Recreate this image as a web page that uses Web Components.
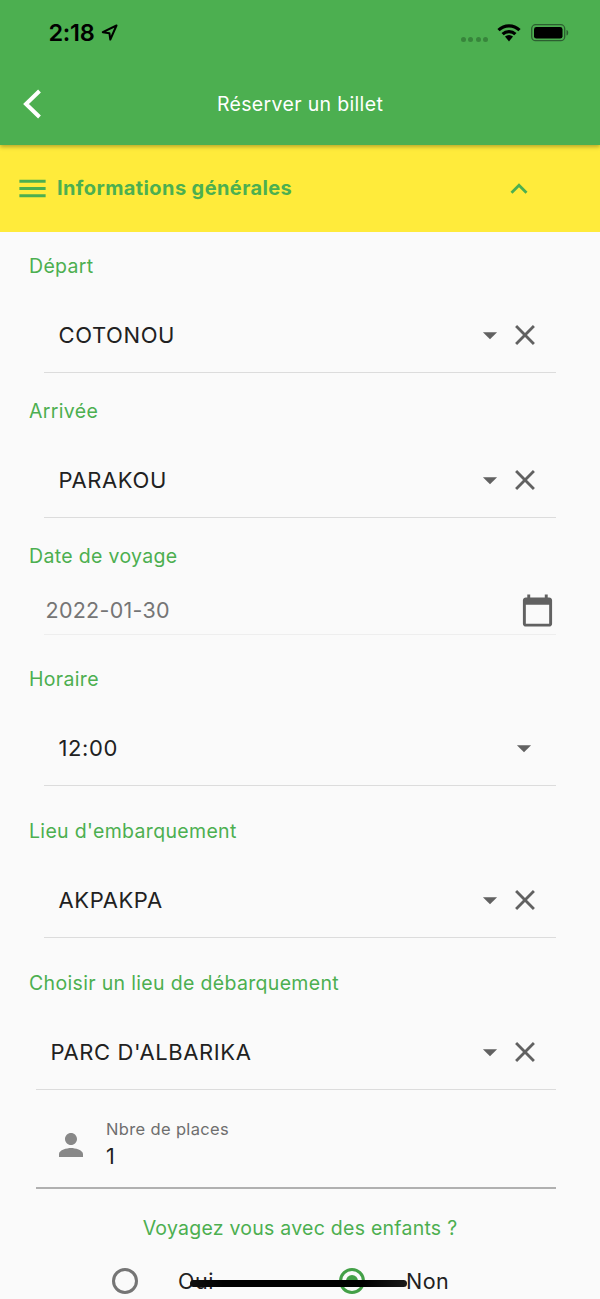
<!DOCTYPE html>
<html lang="fr"><head><meta charset="utf-8"><title>Réserver un billet</title>
<style>
html,body{margin:0;padding:0;height:1299px;overflow:hidden;background:#fafafa;font-family:Inter,"Noto Sans",sans-serif}
</style></head><body>
<app-bar title="Réserver un billet"></app-bar>
<section-header title="Informations générales"></section-header>
<form-label style="--top:22px;--lh:23px">Départ</form-label>
<select-field value="COTONOU" clear></select-field>
<form-label style="--top:26px;--lh:23px">Arrivée</form-label>
<select-field value="PARAKOU" clear></select-field>
<form-label style="--top:26px;--lh:23px">Date de voyage</form-label>
<date-field value="2022-01-30"></date-field>
<form-label style="--top:32px;--lh:23px">Horaire</form-label>
<select-field value="12:00" wide></select-field>
<form-label style="--top:33px">Lieu d'embarquement</form-label>
<select-field value="AKPAKPA" clear style="--p:18px;--h:76px"></select-field>
<form-label style="--top:33px">Choisir un lieu de débarquement</form-label>
<select-field value="PARC D'ALBARIKA" clear shifted style="--p:18px;--h:76px"></select-field>
<places-field label="Nbre de places" value="1"></places-field>
<radio-question question="Voyagez vous avec des enfants ?"></radio-question>
<home-indicator></home-indicator>
<script>
const ICON={
close:'M19 6.41L17.59 5 12 10.59 6.41 5 5 6.41 10.59 12 5 17.59 6.41 19 12 13.41 17.59 19 19 17.59 13.41 12z',
drop:'M7 10l5 5 5-5z',
cal:'M20 3h-1V1h-2v2H7V1H5v2H4c-1.1 0-2 .9-2 2v16c0 1.1.9 2 2 2h16c1.1 0 2-.9 2-2V5c0-1.1-.9-2-2-2zm0 18H4V8h16v13z',
person:'M12 12c2.21 0 4-1.79 4-4s-1.79-4-4-4-4 1.79-4 4 1.79 4 4 4zm0 2c-2.67 0-8 1.34-8 4v2h16v-2c0-2.66-5.33-4-8-4z',
menu:'M3 18h18v-2H3v2zm0-5h18v-2H3v2zm0-7v2h18V6H3z',
less:'M12 8l-6 6 1.41 1.41L12 10.83l4.59 4.58L18 14z'};
const icon=(n,s,c)=>`<svg width="${s}" height="${s}" viewBox="0 0 24 24" fill="${c}" style="display:block;flex:none"><path d="${ICON[n]}"/></svg>`;
class Base extends HTMLElement{
  connectedCallback(){ if(!this.shadowRoot){this.attachShadow({mode:'open'}).innerHTML=this.render();} }
  a(n){return this.getAttribute(n)||''}
}
customElements.define('app-bar',class extends Base{render(){return `<style>
:host{display:block;height:145px;background:#4caf50;box-shadow:0 2px 4px rgba(0,0,0,.28);position:relative;z-index:2}
.status{height:66px;display:flex;align-items:flex-start;padding:0 31px 0 48.500px}
.time{font:600 23.5px/24px Inter,sans-serif;color:#000;margin-top:21px;letter-spacing:-.3px}
.loc{margin:24px 0 0 7px}
.sp{flex:1}
.dots{display:flex;gap:2.500px;margin:36.500px 9px 0 0}.dots i{width:5px;height:5px;border-radius:50%;background:#37853b}
.wifi{margin:24px 10px 0 0}.batt{margin:24px 0 0 0}
.nav{height:79px;display:flex;align-items:center;position:relative}
.back{margin:-3px 0 0 22px}
.t{position:absolute;left:0;right:0;top:26px;text-align:center;font:400 19.5px/24px Inter,sans-serif;color:#fff;letter-spacing:.34px}
</style>
<div class="status"><span class="time">2:18</span>
<svg class="loc" width="17" height="17" viewBox="0 0 17 17"><path d="M15.5 1.5 1.8 8.2l6.6 1 .9 6.3z" fill="none" stroke="#000" stroke-width="2" stroke-linejoin="round"/></svg>
<span class="sp"></span><span class="dots"><i></i><i></i><i></i><i></i></span>
<svg class="wifi" width="24" height="18" viewBox="0 0 24 18"><path d="M1.5 6.2a15 15 0 0 1 21 0" fill="none" stroke="#000" stroke-width="3.2"/><path d="M5.6 10.2a9.2 9.2 0 0 1 12.8 0" fill="none" stroke="#000" stroke-width="3.2"/><path d="M8 12.5a6 6 0 0 1 8 0L12 17.5z" fill="#000"/></svg>
<svg class="batt" width="38" height="18" viewBox="0 0 38 18"><rect x=".7" y=".7" width="33" height="16" rx="4" fill="none" stroke="#2c5e30" stroke-width="1.3"/><rect x="3" y="3" width="28.5" height="11.6" rx="2.4" fill="#000"/><path d="M35.5 6v5.5c1.2-.3 1.7-1.5 1.7-2.8S36.700 6.300 35.500 6z" fill="#2c5e30"/></svg>
</div>
<div class="nav"><svg class="back" width="20" height="30" viewBox="0 0 20 30"><path d="M17.500 2 4 15l13.500 13" fill="none" stroke="#fff" stroke-width="4"/></svg><div class="t">${this.a('title')}</div></div>`}});
customElements.define('section-header',class extends Base{render(){return `<style>
:host{display:flex;height:87px;background:#ffeb3b;align-items:center;padding-left:15px;color:#4caf50}
.t{font:700 20px/24px Inter,sans-serif;margin-left:7px;flex:1;letter-spacing:.4px;margin-top:-1px}
.l{margin-right:64px}
</style>${icon('menu',35,'#4caf50')}<span class="t">${this.a('title')}</span><span class="l">${icon('less',34,'#4caf50')}</span>`}});
customElements.define('form-label',class extends Base{render(){return `<style>
:host{display:block;padding:var(--top,25px) 0 0 29px;font:400 19.5px/24px Inter,sans-serif;color:#4caf50;height:var(--lh,24px);letter-spacing:.33px}
</style><slot></slot>`}});
customElements.define('select-field',class extends Base{render(){
const sh=this.hasAttribute('shifted');
return `<style>
:host{display:flex;align-items:center;height:var(--h,75px);padding:var(--p,20px) 0 0 15px;margin:0 44px 0 ${sh?36:44}px;border-bottom:1px solid #dcdcdc}
.v{flex:1;font:400 22px/28px Inter,sans-serif;color:#212121;margin-top:1px;letter-spacing:.6px;margin-left:-.5px}
.d{margin-right:${this.hasAttribute('wide')?15:1}px}
.c{margin:0 14.500px 0 0}
svg{margin-top:1px}
</style><span class="v">${this.a('value')}</span><span class="d">${icon('drop',34,'#616161')}</span>${this.hasAttribute('clear')?`<span class="c">${icon('close',34,'#616161')}</span>`:''}`}});
customElements.define('date-field',class extends Base{render(){return `<style>
:host{display:flex;align-items:center;height:47px;padding:20px 0 0 1.500px;margin:0 44px;border-bottom:1px solid #eee}
.v{flex:1;font:400 21.500px/28px Inter,sans-serif;color:#757575;margin-top:-1px;letter-spacing:.27px}
span.i{margin:0 1px 0 0}
</style><span class="v">${this.a('value')}</span><span class="i">${icon('cal',35,'#616161')}</span>`}});
customElements.define('places-field',class extends Base{render(){return `<style>
:host{display:flex;align-items:center;height:86px;padding:11px 0 0 17px;margin:0 44px 0 36px;border-bottom:2px solid #b0b0b0}
.b{margin-left:17px}
.i{margin-top:2px}
.l{font:400 16.500px/20px Inter,sans-serif;color:#6e6e6e;letter-spacing:.35px}
.v{font:400 21.500px/28px Inter,sans-serif;color:#212121;margin-top:3px}
</style><span class="i">${icon('person',36,'#888')}</span><div class="b"><div class="l">${this.a('label')}</div><div class="v">${this.a('value')}</div></div>`}});
customElements.define('radio-question',class extends Base{render(){
const r=(on)=>`<svg width="28" height="28" viewBox="0 0 28 28" style="display:block;flex:none"><circle cx="14" cy="14" r="11.5" fill="none" stroke="${on?'#43a047':'#757575'}" stroke-width="3"/>${on?'<circle cx="14" cy="14" r="6" fill="#43a047"/>':''}</svg>`;
return `<style>
:host{display:block;padding-top:27px;text-align:center}
.q{font:400 19.500px/24px Inter,sans-serif;color:#4caf50;letter-spacing:.25px}
.r{display:flex;align-items:center;margin-top:27px;padding-left:111px;height:28px}
.t{font:400 21.500px/28px Inter,sans-serif;color:#212121;letter-spacing:.5px}
.o{margin:0 0 0 39px;width:160px;text-align:left}
.n{margin-left:40px}
</style><div class="q">${this.a('question')}</div><div class="r">${r(false)}<span class="t o">Oui</span>${r(true)}<span class="t n">Non</span></div>`}});
customElements.define('home-indicator',class extends Base{render(){return `<style>
:host{position:fixed;left:190px;top:1279.500px;width:217px;height:7px;border-radius:4px;background:linear-gradient(90deg,#111,#000 15%,#000 80%,#1a1a1a);z-index:5}
</style>`}});
</script>
</body></html>
